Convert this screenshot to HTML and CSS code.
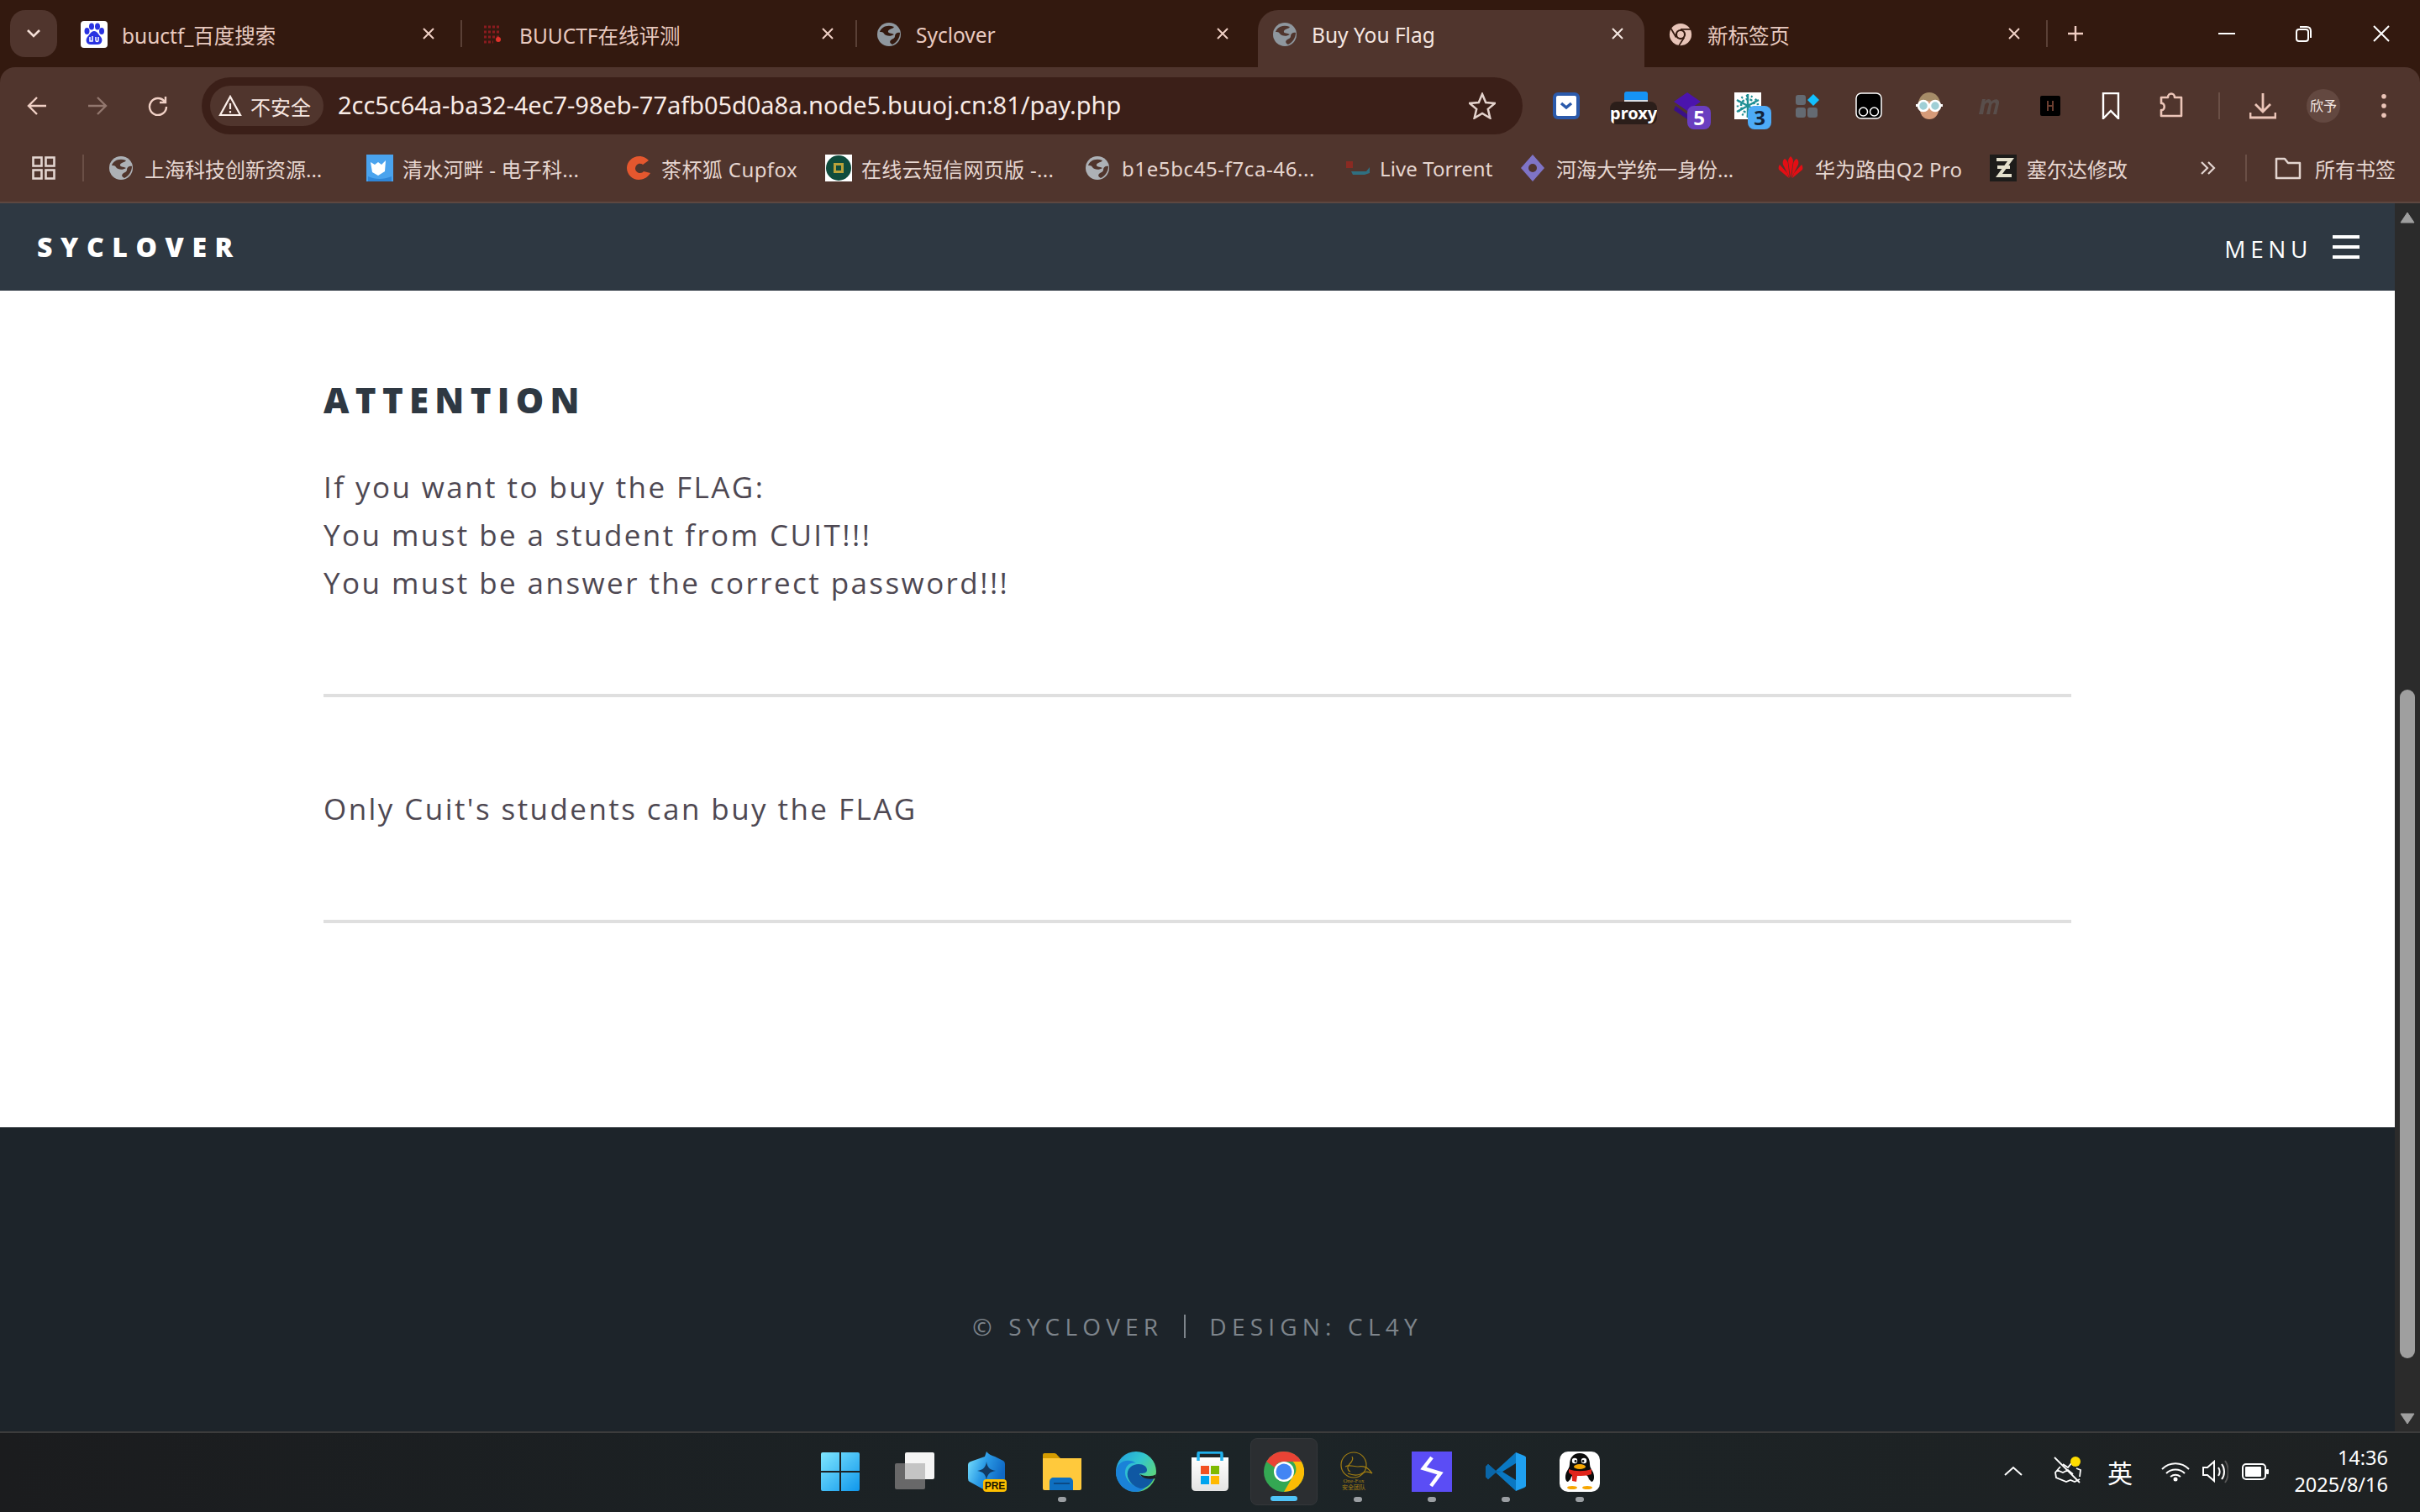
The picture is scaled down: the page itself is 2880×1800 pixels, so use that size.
FILE: index.html
```html
<!DOCTYPE html>
<html lang="zh-CN">
<head>
<meta charset="utf-8">
<title>Buy You Flag</title>
<link rel="stylesheet" href="styles.css">
</head>
<body>
<svg class="defs" width="0" height="0" aria-hidden="true">
  <symbol id="globe" viewBox="0 0 28 28">
    <circle cx="14" cy="14" r="14" fill="currentColor"/>
    <path d="M3 11C5 5 12 2 20 5c-2 3-6 2-7 5-1 3 4 2 7 4-4 3-10 2-12-1-1-2-3-2-5-2zM27 12c-3-1-6 1-6 4 0 3-3 3-5 5-2 2 0 4 2 5 5-2 9-8 9-14z" fill="var(--gb)"/>
  </symbol>
  <symbol id="close" viewBox="0 0 16 16">
    <path d="M2 2l12 12M14 2L2 14" fill="none" stroke="currentColor" stroke-width="2"/>
  </symbol>
</svg>
<div class="screen">
  <header class="tabstrip">
    <button class="tab-menu" type="button">
      <svg width="20" height="12" viewBox="0 0 20 12"><path d="M3 2l7 7 7-7" fill="none" stroke="#f3ded6" stroke-width="2.6"/></svg>
    </button>
    <div class="tab tab-1">
      <svg class="fav fav-wide" viewBox="0 0 32 32"><rect width="32" height="32" rx="4" fill="#fff"/><g fill="#2932e1"><ellipse cx="7.500" cy="12" rx="3" ry="4"/><ellipse cx="13" cy="6.500" rx="3" ry="4"/><ellipse cx="20" cy="6.500" rx="3" ry="4"/><ellipse cx="25" cy="12" rx="3" ry="4"/><path d="M16 12c-4 0-5 4-8 7-3 4-1 9 4 9h8c5 0 7-5 4-9-3-3-4-7-8-7z"/></g><path d="M11 19v5h3v-6M18 19v4c0 2 3 2 3 0v-4" fill="none" stroke="#fff" stroke-width="1.500"/></svg>
      <span class="tab-title">buuctf_百度搜索</span>
      <svg class="tab-x"><use href="#close"/></svg>
    </div>
    <div class="tab tab-2 tab-sep">
      <svg class="fav fav-das" viewBox="0 0 24 32"><path d="M2 7h20M2 13h20M2 19h20M2 25h11" stroke="#8a1b1f" stroke-width="3" stroke-dasharray="3 2" fill="none"/><circle cx="19" cy="22" r="3" fill="#e0322b"/></svg>
      <span class="tab-title">BUUCTF在线评测</span>
      <svg class="tab-x"><use href="#close"/></svg>
    </div>
    <div class="tab tab-sep">
      <svg class="fav"><use href="#globe"/></svg>
      <span class="tab-title">Syclover</span>
      <svg class="tab-x"><use href="#close"/></svg>
    </div>
    <div class="tab tab-active">
      <svg class="fav"><use href="#globe"/></svg>
      <span class="tab-title">Buy You Flag</span>
      <svg class="tab-x"><use href="#close"/></svg>
    </div>
    <div class="tab">
      <svg class="fav" viewBox="0 0 32 32"><circle cx="16" cy="16" r="15" fill="#e8c4b8"/><circle cx="16" cy="16" r="7" fill="#33190f"/><circle cx="16" cy="16" r="4.500" fill="#e8c4b8"/><path d="M16 9h14M10 20L3 8M21 20l-7 11" stroke="#33190f" stroke-width="2" fill="none"/></svg>
      <span class="tab-title">新标签页</span>
      <svg class="tab-x"><use href="#close"/></svg>
    </div>
    <span class="strip-sep"></span>
    <svg class="new-tab" viewBox="0 0 20 20"><path d="M10 1v18M1 10h18" stroke="#f0cdc2" stroke-width="2.400" fill="none"/></svg>
    <div class="win-controls">
      <svg width="20" height="4" viewBox="0 0 20 4"><path d="M0 2h20" stroke="#fff" stroke-width="2"/></svg>
      <svg width="20" height="20" viewBox="0 0 20 20"><rect x="1" y="5" width="14" height="14" rx="3" fill="none" stroke="#fff" stroke-width="2"/><path d="M5 2h8c3 0 5 2 5 5v8" fill="none" stroke="#fff" stroke-width="2"/></svg>
      <svg width="20" height="20" viewBox="0 0 20 20"><path d="M1 1l18 18M19 1L1 19" stroke="#fff" stroke-width="2" fill="none"/></svg>
    </div>
  </header>

  <div class="toolbar">
    <svg class="nav-ic" viewBox="0 0 24 24"><path d="M23 12H3M12 2L2 12l10 10" fill="none" stroke="#f0d0c5" stroke-width="2.400"/></svg>
    <svg class="nav-ic" viewBox="0 0 24 24"><path d="M1 12h20M12 2l10 10-10 10" fill="none" stroke="#92776e" stroke-width="2.400"/></svg>
    <svg class="nav-ic" viewBox="0 0 24 24"><path d="M20 7a10 10 0 1 0 2 6M21 1v7h-7" fill="none" stroke="#f0d0c5" stroke-width="2.400"/></svg>
    <div class="omnibox">
      <div class="chip">
        <svg width="28" height="26" viewBox="0 0 28 26"><path d="M14 2L2 24h24zM14 10v7M14 19v2.500" fill="none" stroke="#fbeee9" stroke-width="2.200"/></svg>
        <span>不安全</span>
      </div>
      <span class="url">2cc5c64a-ba32-4ec7-98eb-77afb05d0a8a.node5.buuoj.cn:81/pay.php</span>
      <svg class="star" viewBox="0 0 32 32"><path d="M16 2l4.200 10 10.800.900-8.200 7 2.500 10.600L16 24.900l-9.300 5.600 2.500-10.600-8.200-7L11.800 12z" fill="none" stroke="#e4d3cd" stroke-width="2.500"/></svg>
    </div>
    <div class="extensions">
      <svg class="ext" viewBox="0 0 32 32"><rect width="32" height="32" rx="6" fill="#2b5aab"/><rect x="4" y="4" width="24" height="24" rx="2" fill="#fff"/><path d="M10 13l6 5 6-5" fill="none" stroke="#2b5aab" stroke-width="3.500"/></svg>
      <div class="ext ext-proxy"><span class="proxy-top"></span><span class="proxy-word">proxy</span></div>
      <div class="ext ext-badged">
        <svg width="32" height="32" viewBox="0 0 32 32"><path d="M16 0l16 11-16 11L0 11z" fill="#4b14ad"/><path d="M2 16l14 10 14-10v6l-14 10L0 21z" fill="#3a1088"/></svg>
        <span class="badge badge-purple">5</span>
      </div>
      <div class="ext ext-badged">
        <svg width="32" height="32" viewBox="0 0 32 32"><rect width="32" height="32" fill="#fff"/><g fill="none" stroke="#1f8f95" stroke-width="2.500"><path d="M16 2v28M3 9l26 14M29 9L3 23"/><circle cx="16" cy="16" r="8" stroke-dasharray="3 2"/><circle cx="16" cy="16" r="12" stroke-dasharray="2 4"/></g></svg>
        <span class="badge badge-blue">3</span>
      </div>
      <svg class="ext" viewBox="0 0 32 32"><rect x="1" y="3" width="12" height="12" rx="3" fill="#646a72"/><rect x="1" y="18" width="12" height="12" rx="3" fill="#646a72"/><rect x="15" y="18" width="12" height="12" rx="3" fill="#646a72"/><path d="M22 2l7 7-7 7-7-7z" fill="#12c0ff"/></svg>
      <svg class="ext" viewBox="0 0 32 32"><rect x="1" y="1" width="30" height="30" rx="6" fill="#000" stroke="#fff" stroke-width="1.500"/><circle cx="9.500" cy="23" r="5" fill="none" stroke="#fff" stroke-width="1.500"/><circle cx="22.500" cy="23" r="5" fill="none" stroke="#fff" stroke-width="1.500"/></svg>
      <svg class="ext" viewBox="0 0 32 32"><ellipse cx="16" cy="14" rx="13" ry="14" fill="#a58c68"/><ellipse cx="16" cy="21" rx="11" ry="11" fill="#d69a78"/><rect x="0" y="14" width="32" height="3" fill="#fff"/><circle cx="9" cy="16" r="6" fill="#9fcfd6" stroke="#fff" stroke-width="2.500"/><circle cx="23" cy="16" r="6" fill="#9fcfd6" stroke="#fff" stroke-width="2.500"/></svg>
      <svg class="ext" viewBox="0 0 32 32"><path d="M3 26l4-18h4l-1 3c3-4 7-4 8 0 3-4 10-4 9 2l-3 13h-4l3-12c0-3-4-2-5 1l-2 11h-4l3-12c0-3-4-2-5 1l-2 11z" fill="#5f5f5f" opacity=".6"/></svg>
      <svg class="ext" viewBox="0 0 32 32"><rect x="4" y="4" width="24" height="24" rx="2" fill="#000"/><path d="M13 10v12M19 10v12M13 16h6" stroke="#6b3e30" stroke-width="2" fill="none"/></svg>
      <svg class="ext" viewBox="0 0 32 32"><path d="M7 1h18v30l-9-9-9 9z" fill="none" stroke="#fff" stroke-width="2.400"/></svg>
      <svg class="ext" viewBox="0 0 32 32"><path d="M4 6h8c0-6 8-6 8 0h8v22H4v-7c5 1 5-9 0-8z" fill="none" stroke="#ecc5b8" stroke-width="2.600" stroke-linejoin="round"/></svg>
      <span class="tool-sep"></span>
      <svg class="ext" viewBox="0 0 32 32"><path d="M16 1v21M7 14l9 9 9-9M1 24v6h30v-6" fill="none" stroke="#ecc5b8" stroke-width="2.800"/></svg>
      <span class="avatar">欣予</span>
      <svg class="ext dots" viewBox="0 0 8 32"><circle cx="4" cy="4" r="3" fill="#ecc5b8"/><circle cx="4" cy="16" r="3" fill="#ecc5b8"/><circle cx="4" cy="28" r="3" fill="#ecc5b8"/></svg>
    </div>
  </div>

  <nav class="bookmarks">
    <svg class="apps" viewBox="0 0 28 28"><g fill="none" stroke="#e3d5d0" stroke-width="2.600"><rect x="1.500" y="1.500" width="10" height="10"/><rect x="16.500" y="1.500" width="10" height="10"/><rect x="1.500" y="16.500" width="10" height="10"/><rect x="16.500" y="16.500" width="10" height="10"/></g></svg>
    <span class="bm-sep"></span>
    <div class="bm bm-1"><svg class="bm-ic"><use href="#globe"/></svg><span>上海科技创新资源...</span></div>
    <div class="bm bm-2"><svg class="bm-ic" viewBox="0 0 32 32"><rect width="32" height="32" fill="#4aa3ee"/><path d="M5 9l5 3 4-3 4 3 5-5-1 13-8 5-7-4z" fill="#fff"/><path d="M2 26c9 4 18 4 28 0v6H2z" fill="#2f86d8"/></svg><span>清水河畔 - 电子科...</span></div>
    <div class="bm bm-3"><svg class="bm-ic" viewBox="0 0 32 32"><path d="M17 2C8 2 2 9 2 16c0 8 7 14 14 14 6 0 11-3 14-8l-8-2c-2 3-9 3-10-3 0-5 5-8 9-5l7-5c-3-3-7-5-11-5z" fill="#e4572e"/></svg><span>茶杯狐 Cupfox</span></div>
    <div class="bm bm-4"><svg class="bm-ic" viewBox="0 0 32 32"><rect width="32" height="32" fill="#fff"/><circle cx="16" cy="16" r="15" fill="#0f4c3d"/><rect x="10" y="10" width="12" height="12" fill="#b9a23a"/><rect x="13" y="13" width="6" height="6" fill="#0f4c3d"/></svg><span>在线云短信网页版 -...</span></div>
    <div class="bm bm-5"><svg class="bm-ic"><use href="#globe"/></svg><span>b1e5bc45-f7ca-46...</span></div>
    <div class="bm bm-6"><svg class="bm-ic" viewBox="0 0 32 32"><path d="M2 8h8v8H2z" fill="#8a2a22"/><path d="M8 20h18l4-5v7l-6 2H10z" fill="#2f6f80"/></svg><span>Live Torrent</span></div>
    <div class="bm bm-7"><svg class="bm-ic" viewBox="0 0 32 32"><path d="M16 0l14 16-14 16L2 16z" fill="#7f74c6"/><circle cx="16" cy="16" r="5" fill="#50352d"/></svg><span>河海大学统一身份...</span></div>
    <div class="bm bm-8"><svg class="bm-ic" viewBox="0 0 32 32"><g fill="#e30e14"><path d="M16 28L13 8c0-3 2-5 3-6 1 1 3 3 3 6z"/><path d="M15 28L7 12c-1-3 0-6 2-7 2 1 4 4 4 7z"/><path d="M17 28l8-16c1-3 0-6-2-7-2 1-4 4-4 7z"/><path d="M14 28L2 18c-1-2 0-5 1-6l9 10z"/><path d="M18 28l12-10c1-2 0-5-1-6l-9 10z"/></g></svg><span>华为路由Q2 Pro</span></div>
    <div class="bm bm-9"><svg class="bm-ic" viewBox="0 0 32 32"><rect width="32" height="32" fill="#1d1c1a"/><path d="M8 6h17L11 25h15M9 15h15" fill="none" stroke="#e4e0cc" stroke-width="4"/></svg><span>塞尔达修改</span></div>
    <svg class="chev" viewBox="0 0 20 20"><path d="M3 3l7 7-7 7M11 3l7 7-7 7" fill="none" stroke="#e3d5d0" stroke-width="2.200"/></svg>
    <span class="bm-sep bm-sep-end"></span>
    <div class="bm bm-all"><svg class="bm-ic" viewBox="0 0 32 32"><path d="M2 5h10l4 5h14v18H2z" fill="none" stroke="#e3d5d0" stroke-width="2.500" stroke-linejoin="round"/></svg><span>所有书签</span></div>
  </nav>

  <div class="viewport">
    <main class="page">
      <div class="site-nav">
        <span class="brand">SYCLOVER</span>
        <span class="menu"><span class="menu-label">MENU</span>
          <span class="burger"><i></i><i></i><i></i></span>
        </span>
      </div>
      <article class="content">
        <h2 class="heading">ATTENTION</h2>
        <p class="para">If you want to buy the FLAG:<br>You must be a student from CUIT!!!<br>You must be answer the correct password!!!</p>
        <hr class="rule">
        <p class="para para-2">Only Cuit's students can buy the FLAG</p>
        <hr class="rule rule-2">
      </article>
      <footer class="site-footer">
        <span>© SYCLOVER</span><span class="foot-bar"></span><span>DESIGN: CL4Y</span>
      </footer>
    </main>
    <div class="scrollbar">
      <svg width="18" height="14" viewBox="0 0 18 14"><path d="M9 1l8 12H1z" fill="#9f9f9f" stroke="#9f9f9f" stroke-linejoin="round"/></svg>
      <span class="thumb"></span>
      <svg width="18" height="14" viewBox="0 0 18 14"><path d="M9 13L17 1H1z" fill="#9f9f9f" stroke="#9f9f9f" stroke-linejoin="round"/></svg>
    </div>
  </div>

  <footer class="taskbar">
    <div class="task-apps">
      <div class="task"><svg class="task-ic" viewBox="0 0 48 48"><defs><linearGradient id="w" x1="0" y1="0" x2="1" y2="1"><stop offset="0" stop-color="#7fe6ff"/><stop offset="1" stop-color="#0f97ec"/></linearGradient></defs><path d="M1 3a2 2 0 0 1 2-2h20v22H1zM25 1h20a2 2 0 0 1 2 2v20H25zM1 25h22v22H3a2 2 0 0 1-2-2zM25 25h22v20a2 2 0 0 1-2 2H25z" fill="url(#w)"/></svg></div>
      <div class="task"><svg class="task-ic" viewBox="0 0 48 48"><rect x="13" y="1" width="35" height="32" rx="2" fill="#f4f4f4"/><rect x="1" y="14" width="36" height="31" rx="2" fill="#6d6d6d" opacity=".95"/><rect x="13" y="14" width="24" height="19" fill="#c4c4c4"/></svg></div>
      <div class="task"><svg class="task-ic" viewBox="0 0 48 48"><defs><linearGradient id="c" x1="0" y1="0" x2="1" y2=".4"><stop offset="0" stop-color="#7fe6ff"/><stop offset=".5" stop-color="#2b9be6"/><stop offset="1" stop-color="#0f68c4"/></linearGradient></defs><path d="M22 0c2 3 6 5 10 6l10 5q2 1 2 4v18L22 47 2 36q-2-1-2-4V16q0-3 3-4l17-6z" fill="url(#c)"/><path d="M22 12c1 7 4 10 11 11-7 1-10 4-11 11-1-7-4-10-11-11 7-1 10-4 11-11z" fill="#123a63"/><rect x="18" y="33" width="28" height="15" rx="4" fill="#ffc000"/><text x="32" y="45" class="pre">PRE</text></svg></div>
      <div class="task task-run"><svg class="task-ic" viewBox="0 0 48 48"><path d="M1 4q0-2 2-2h12q2 0 4 3l3 3H1z" fill="#d59c00"/><path d="M1 8h46v36q0 2-2 2H3q-2 0-2-2z" fill="#ffc93c"/><path d="M9 46V36c0-3 2-5 5-5h18c3 0 5 2 5 5v10z" fill="#0e6fc0"/><rect x="14" y="37" width="19" height="2" fill="#0b4a85"/></svg></div>
      <div class="task"><svg class="task-ic" viewBox="0 0 48 48"><defs><linearGradient id="e" x1="0" y1="0" x2="1" y2=".7"><stop offset="0" stop-color="#1f9be0"/><stop offset=".5" stop-color="#32c6cf"/><stop offset="1" stop-color="#63d86f"/></linearGradient></defs><circle cx="24" cy="24" r="24" fill="url(#e)"/><path d="M0 24C2 10 16 8 24 14c-8-2-13 4-13 11 0 11 13 20 25 17-4 4-8 6-13 6C10 48 0 37 0 24z" fill="#1a82d8"/><path d="M14 30c-2-10 6-15 13-15 6 0 10 3 10 7 0 3-3 4-7 4-1 0-2 0-2 1 2 4 10 6 18 3-3 8-9 14-17 14-7-2-13-7-15-14z" fill="#0f58a3"/><path d="M48 27c-4 3-14 3-19 0 1 4 9 7 18 5z" fill="#1c2024"/></svg></div>
      <div class="task"><svg class="task-ic" viewBox="0 0 48 48"><defs><linearGradient id="s" x1="0" y1="0" x2="0" y2="1"><stop offset="0" stop-color="#fff"/><stop offset="1" stop-color="#e3e3e3"/></linearGradient></defs><path d="M2 7h44v35q0 5-5 5H7q-5 0-5-5z" fill="url(#s)"/><path d="M10 11V3q0-2 2-2h24q2 0 2 2v8" fill="none" stroke="#20b0ec" stroke-width="3.500"/><rect x="13" y="17" width="10" height="10" fill="#f25022"/><rect x="25" y="17" width="10" height="10" fill="#7fba00"/><rect x="13" y="29" width="10" height="10" fill="#00a4ef"/><rect x="25" y="29" width="10" height="10" fill="#ffb900"/></svg></div>
      <div class="task task-active"><svg class="task-ic" viewBox="0 0 48 48"><circle cx="24" cy="24" r="24" fill="#34a853"/><path d="M24 0a24 24 0 0 1 20.800 12H24a12 12 0 0 0-11 7L3.200 12A24 24 0 0 1 24 0z" fill="#ea4335"/><path d="M44.800 12A24 24 0 0 1 24 48l10.400-18a12 12 0 0 0 0-18z" fill="#fbbc04"/><circle cx="24" cy="24" r="12" fill="#fff"/><circle cx="24" cy="24" r="9.500" fill="#4285f4"/></svg></div>
      <div class="task task-run"><svg class="task-ic task-gold" viewBox="0 0 48 48"><g fill="none" stroke="#a27e12" stroke-width="1.200"><circle cx="17" cy="16" r="15"/><path d="M15 6c2 3 0 6-3 9-3 3-3 7 1 9"/><path d="M7 18c5-3 9 0 15 0 7-1 11 0 17 8-6-3-9-2-14 1-5 2-10 1-15-1"/></g><text x="17" y="37" class="gold">One-Fox</text><text x="17" y="45" class="gold">安全团队</text></svg></div>
      <div class="task task-run"><svg class="task-ic" viewBox="0 0 48 48"><rect width="48" height="48" fill="#5b4df5"/><path d="M24 7L14 20l20 6-11 15" fill="none" stroke="#fff" stroke-width="4.500"/></svg></div>
      <div class="task task-run"><svg class="task-ic" viewBox="0 0 48 48"><path d="M36 1L12 23l-9-8-3 3v12l3 3 9-8 24 22V34L20 24l16-10z" fill="#0a78c2"/><path d="M3 33l9-8 8-1-8-1-9-8-3 3v12z" fill="#0a66a8"/><path d="M36 1l10 4q2 1 2 2v34q0 1-2 2l-10 4z" fill="#1fa0f0"/></svg></div>
      <div class="task task-run"><svg class="task-ic" viewBox="0 0 48 48"><rect width="48" height="48" rx="10" fill="#fff"/><path d="M24 2c-8 0-12 6-12 13 0 4-2 6-4 10-2 5-1 11 2 11l3-3c1 5 4 8 11 8s10-3 11-8l3 3c3 0 4-6 2-11-2-4-4-6-4-10 0-7-4-13-12-13z" fill="#0c0c0c"/><ellipse cx="24" cy="34" rx="11" ry="9" fill="#fff"/><circle cx="18" cy="11" r="3.200" fill="#fff"/><circle cx="29" cy="11" r="3.200" fill="#fff"/><circle cx="19" cy="11.500" r="1.400" fill="#111"/><circle cx="28" cy="11.500" r="1.400" fill="#111"/><ellipse cx="24" cy="18" rx="7" ry="3" fill="#f7a600"/><path d="M11 21c8 3 18 3 27 0v6c-6 2-11 2-17 2l-1 7-5-1v-7c-2-1-3-2-4-3z" fill="#e1251b"/><ellipse cx="15" cy="43" rx="6" ry="2" fill="#f7a600"/><ellipse cx="33" cy="43" rx="6" ry="2" fill="#f7a600"/></svg></div>
    </div>
    <div class="tray">
      <svg class="t-caret" viewBox="0 0 22 12"><path d="M1 11L11 2l10 9" fill="none" stroke="#fff" stroke-width="2"/></svg>
      <svg class="t-cloud" viewBox="0 0 34 32"><path d="M1 1l30 30" fill="none" stroke="#fff" stroke-width="1.800"/><path d="M8 12l-6 7 1 6 12 5 5-2 5 2 6-3M31 24l1-8-5-2M11 9l6 4 5-6 2 4M4 16l7 3 6-3 6 5" fill="none" stroke="#fff" stroke-width="1.800"/><circle cx="26" cy="6" r="6" fill="#ffdd00"/></svg>
      <span class="t-ime">英</span>
      <svg class="t-wifi" viewBox="0 0 34 24"><g fill="none" stroke="#fff" stroke-width="2"><path d="M1 9c9-9 23-9 32 0"/><path d="M6 14c6-6 16-6 22 0"/><path d="M11 18c4-3 8-3 12 0"/></g><circle cx="17" cy="21" r="2.500" fill="#fff"/></svg>
      <svg class="t-vol" viewBox="0 0 32 28"><path d="M2 9v9h5l8 7V2L7 9z" fill="none" stroke="#fff" stroke-width="2"/><path d="M20 9c2 3 2 7 0 10M24 5c4 5 4 13 0 18" fill="none" stroke="#fff" stroke-width="2"/><path d="M28 1c5 7 5 19 0 26" fill="none" stroke="#555" stroke-width="2"/></svg>
      <svg class="t-bat" viewBox="0 0 32 20"><rect x="1" y="1" width="27" height="18" rx="4" fill="none" stroke="#fff" stroke-width="2"/><rect x="4" y="4" width="19" height="12" rx="1" fill="#fff"/><rect x="29" y="7" width="3" height="6" rx="1" fill="#fff"/></svg>
      <div class="clock"><span>14:36</span><span>2025/8/16</span></div>
    </div>
  </footer>
</div>
</body>
</html>
```

FILE: styles.css
```css
* { box-sizing: border-box; }
html, body { margin: 0; padding: 0; width: 2880px; height: 1800px; overflow: hidden; }
body { font-family: "Noto Sans", "Noto Sans CJK SC", sans-serif; background: #33190f; }
.defs { position: absolute; }
.screen { display: flex; flex-direction: column; width: 2880px; height: 1800px; }

/* tab strip */
.tabstrip { display: flex; align-items: flex-start; height: 80px; background: #33190f; padding-left: 12px; position: relative; --gb: #33190f; }
.tab-menu { width: 56px; height: 56px; margin-top: 12px; border: 0; border-radius: 18px; background: #50352d; display: flex; align-items: center; justify-content: center; padding: 0; margin-right: 28px; flex: none; }
.tab { position: relative; width: 471px; height: 68px; margin-top: 12px; display: flex; align-items: center; color: #e8c9bf; font-size: 24.500px; flex: none; }
.tab-1 { width: 478px; }
.tab-2 { width: 470px; }
.tab-sep::before { content: ""; position: absolute; left: -26px; top: 12px; width: 2px; height: 32px; background: #5a4036; }
.tab-active { width: 460px; margin-left: -18px; padding-left: 18px; margin-right: 29px; background: #50352d; border-radius: 24px 24px 0 0; color: #f5e6e0; --gb: #50352d; }
.fav { width: 28px; height: 32px; flex: none; margin-top: -10px; color: #8f979e; }
.fav-wide { width: 32px; }
.fav-das { width: 24px; }
.tab-title { margin-left: 18px; flex: 1; margin-top: -10px; white-space: nowrap; }
.fav-wide + .tab-title { margin-left: 17px; }
.fav-das + .tab-title { margin-left: 20px; }
.tab-x { width: 16px; height: 16px; position: absolute; top: 20px; left: 403px; color: #f0d0c5; }
.tab-1 .tab-x { left: 406px; }
.tab-active .tab-x { left: 420px; color: #f6e8e2; }
.strip-sep { position: absolute; left: 2435px; top: 24px; width: 2px; height: 32px; background: #5a4036; }
.new-tab { position: absolute; left: 2460px; top: 30px; width: 20px; height: 20px; }
.win-controls { position: absolute; left: 2640px; top: 30px; width: 204px; display: flex; align-items: center; justify-content: space-between; }

/* toolbar */
.toolbar { height: 92px; background: #50352d; display: flex; align-items: center; padding-left: 32px; border-radius: 18px 18px 0 0; flex: none; }
.nav-ic { width: 24px; height: 24px; margin-right: 48px; flex: none; }
.nav-ic:nth-child(3) { margin-right: 40px; }
.omnibox { width: 1572px; height: 68px; background: #3b1f18; border-radius: 34px; display: flex; align-items: center; padding-left: 10px; position: relative; flex: none; }
.chip { width: 135px; height: 48px; border-radius: 24px; background: #50352d; display: flex; align-items: center; padding-left: 10px; gap: 10px; color: #f6e6e0; font-size: 24px; flex: none; }
.url { margin: -3px 0 0 17px; color: #f8ebe6; font-size: 29px; white-space: nowrap; letter-spacing: -.04px; }
.star { width: 32px; height: 32px; position: absolute; right: 32px; top: 18px; }
.extensions { display: flex; align-items: center; margin-left: 36px; position: relative; height: 68px; }
.ext { width: 32px; height: 32px; flex: none; margin-right: 40px; position: relative; }
.ext-proxy { height: 40px; margin-top: 6px; }
.proxy-top { position: absolute; left: 13px; top: 0; width: 28px; height: 14px; background: linear-gradient(#1593f5 70%, #d9dfe6 70%); border-radius: 3px 3px 0 0; }
.proxy-word { position: absolute; left: -4px; top: 12px; width: 56px; height: 27px; overflow: hidden; background: #2b1e1a; border-radius: 8px; color: #fff; font-size: 20px; font-weight: 700; line-height: 27px; text-align: center; white-space: nowrap; }
.ext-badged { height: 32px; }
.badge { position: absolute; left: 16px; top: 16px; width: 28px; height: 28px; border-radius: 8px; color: #fff; font-size: 24px; font-weight: 700; line-height: 28px; text-align: center; }
.badge-purple { background: #6a3ec0; }
.badge-blue { background: #4dabf7; color: #14243a; }
.tool-sep { width: 2px; height: 32px; background: #6a4f46; margin-right: 35px; flex: none; }
.avatar { width: 40px; height: 40px; border-radius: 50%; background: #634840; color: #f4e8e4; font-size: 16px; line-height: 40px; text-align: center; margin-left: -4px; margin-right: 48px; flex: none; }
.dots { width: 8px; height: 30px; margin-right: 0; }

/* bookmarks */
.bookmarks { height: 70px; background: #50352d; display: flex; align-items: center; padding: 0 0 12px 38px; border-bottom: 2px solid #5d4740; color: #e6d6d0; font-size: 24px; flex: none; --gb: #50352d; }
.apps { width: 28px; height: 28px; margin-right: 32px; flex: none; }
.bm-sep { width: 2px; height: 32px; background: #6a4f46; margin-right: 30px; flex: none; }
.bm { display: flex; align-items: center; gap: 11px; flex: none; white-space: nowrap; }
.bm-ic { width: 32px; height: 32px; flex: none; color: #adb1b6; }
.bm-1 { width: 306px; gap: 14px; } .bm-1 .bm-ic { width: 28px; }
.bm-2 { width: 308px; letter-spacing: .2px; }
.bm-3 { width: 238px; letter-spacing: .4px; }
.bm-4 { width: 310px; letter-spacing: .3px; }
.bm-5 { width: 308px; gap: 15px; letter-spacing: .6px; } .bm-5 .bm-ic { width: 28px; }
.bm-6 { width: 208px; gap: 10px; letter-spacing: .1px; }
.bm-7 { width: 307px; gap: 12px; }
.bm-8 { width: 253px; gap: 13px; letter-spacing: .2px; }
.bm-9 { width: 249px; gap: 12px; }
.chev { width: 20px; height: 20px; flex: none; margin-right: 35px; }
.bm-sep-end { margin-right: 33px; }
.bm-all { gap: 16px; }

/* page viewport */
.viewport { flex: 1; min-height: 0; display: flex; }
.page { width: 2850px; background: #fff; display: flex; flex-direction: column; }
.site-nav { height: 104px; background: #2e3842; display: flex; align-items: center; justify-content: space-between; padding: 0 42px 0 44px; color: #fff; flex: none; }
.brand { font-family: "Open Sans", sans-serif; font-weight: 800; font-size: 32px; letter-spacing: 9.600px; margin-top: -2px; }
.menu { font-family: "Open Sans", sans-serif; font-weight: 400; font-size: 28px; letter-spacing: 5.600px; display: flex; align-items: center; gap: 24px; }
.menu-label { padding-top: 4px; }
.burger { display: flex; flex-direction: column; gap: 8px; width: 32px; }
.burger i { display: block; height: 4px; background: #fff; }
.content { flex: 1; padding: 100px 385px 0; font-family: "Open Sans", sans-serif; }
.heading { margin: 0 0 45px; font-size: 42px; line-height: 60px; font-weight: 800; letter-spacing: 7.300px; color: #2e3842; }
.para { margin: 0; font-size: 35px; line-height: 57px; letter-spacing: 2.430px; color: #4e4852; font-weight: 400; }
.rule { border: 0; height: 4px; background: #dfdfdf; margin: 104px 0 0; }
.para-2 { margin-top: 104px; }
.rule-2 { margin-top: 104px; }
.site-footer { height: 362px; flex: none; background: #1d242a; display: flex; align-items: center; justify-content: center; padding: 112px 0 0 0; font-family: "Open Sans", sans-serif; font-size: 28px; letter-spacing: 6.200px; color: #7e858c; }
.foot-bar { width: 2px; height: 28px; background: #7e858c; margin: 0 28px 0 25px; }

.scrollbar { width: 30px; background: #2b2b2b; display: flex; flex-direction: column; align-items: center; padding: 10px 0 8px; position: relative; justify-content: space-between; flex: none; }
.thumb { position: absolute; left: 6px; top: 579px; width: 18px; height: 796px; border-radius: 9px; background: #9f9f9f; }

/* taskbar */
.taskbar { height: 96px; background: linear-gradient(90deg, #1b1c1e, #1c2427 50%, #1e2122); border-top: 2px solid #3c3c3c; position: relative; flex: none; }
.task-apps { position: absolute; left: 956px; top: 6px; display: flex; }
.task { position: relative; width: 88px; height: 80px; display: flex; align-items: center; justify-content: center; }
.task-ic { width: 48px; height: 48px; }
.task-gold { margin-left: 4px; }
.task-run::after { content: ""; position: absolute; left: 39px; bottom: 4px; width: 10px; height: 6px; border-radius: 3px; background: #9a9ea2; }
.task-active { width: 80px; margin: 0 4px; background: #2b2e31; border-radius: 8px; border: 1px solid #34373a; }
.task-active::after { content: ""; position: absolute; left: 23px; bottom: 4px; width: 32px; height: 6px; border-radius: 3px; background: #4fc3f7; }
.pre { font-family: "Liberation Sans", sans-serif; font-size: 12px; font-weight: 700; text-anchor: middle; fill: #1b1400; }
.gold { font-family: "Liberation Serif", "Noto Sans CJK SC", serif; font-size: 7px; text-anchor: middle; fill: #a27e12; }
.tray { position: absolute; left: 0; top: 0; width: 100%; height: 94px; color: #fff; }
.t-caret { position: absolute; left: 2385px; top: 39px; width: 22px; height: 12px; }
.t-cloud { position: absolute; left: 2444px; top: 28px; width: 34px; height: 32px; }
.t-ime { position: absolute; left: 2508px; top: 24px; font-size: 30px; line-height: 44px; font-family: "Noto Sans CJK SC", sans-serif; }
.t-wifi { position: absolute; left: 2572px; top: 34px; width: 34px; height: 24px; }
.t-vol { position: absolute; left: 2620px; top: 32px; width: 32px; height: 28px; }
.t-bat { position: absolute; left: 2668px; top: 36px; width: 32px; height: 20px; }
.clock { position: absolute; right: 38px; top: 13px; display: flex; flex-direction: column; align-items: flex-end; font-size: 23.500px; line-height: 32px; font-family: "Noto Sans", sans-serif; }
```
